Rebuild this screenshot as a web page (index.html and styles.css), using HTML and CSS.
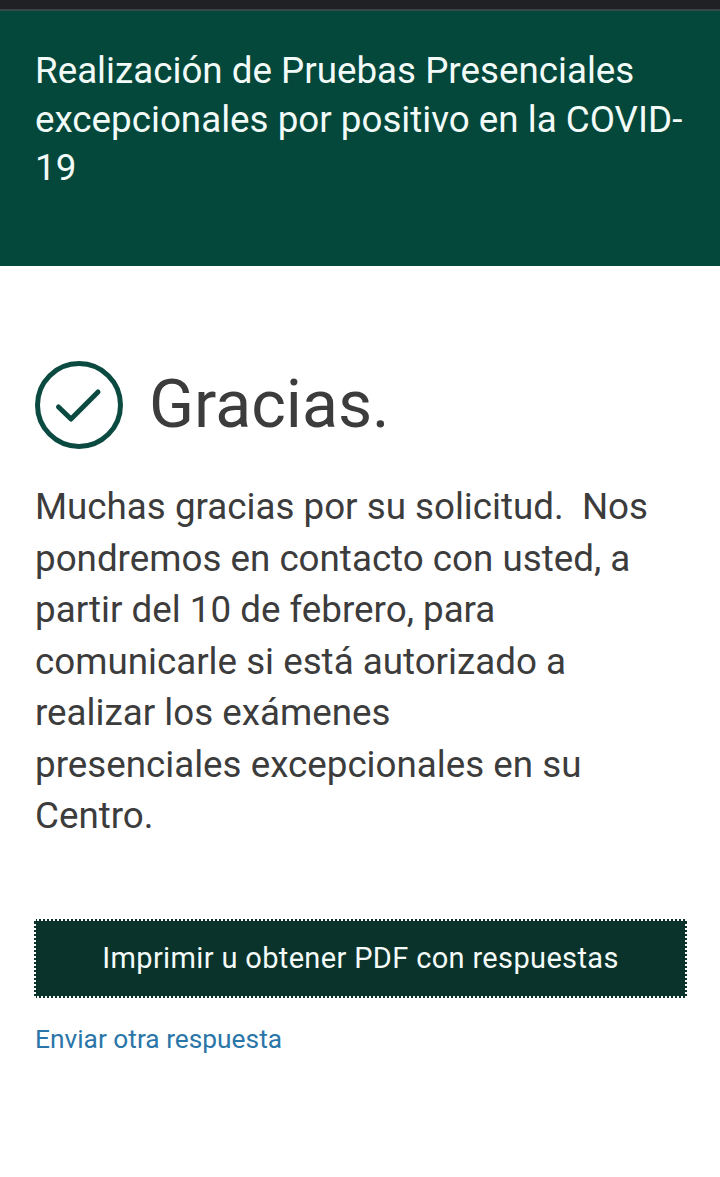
FILE: index.html
```html
<!DOCTYPE html>
<html lang="es">
<head>
  <meta charset="UTF-8">
  <title>Gracias</title>
  <link rel="stylesheet" href="styles.css">
</head>
<body>
  <div class="status-bar"></div>

  <!-- cabecera del formulario -->
  <header class="form-header">
    <h1>Realización de Pruebas Presenciales excepcionales por positivo en la COVID-19</h1>
  </header>

  <main class="content">
    <div class="thanks">
      <svg class="check-icon" viewBox="0 0 88 88" width="88" height="88" aria-hidden="true">
        <circle cx="44" cy="44" r="41.5" fill="none" stroke="#0b4a40" stroke-width="5"/>
        <path d="M23.5 46 L36 58 L63 31" fill="none" stroke="#0b4a40" stroke-width="5" stroke-linecap="round" stroke-linejoin="round"/>
      </svg>
      <h2>Gracias.</h2>
    </div>

    <p class="message">Muchas gracias por su solicitud.&nbsp; Nos pondremos en contacto con usted, a partir del 10 de febrero, para comunicarle si está autorizado a realizar los exámenes presenciales&nbsp;excepcionales en su Centro.</p>

    <button class="print-btn">Imprimir u obtener PDF con respuestas</button>
    <a class="again" href="#">Enviar otra respuesta</a>
  </main>
</body>
</html>
```

FILE: styles.css
```css
html, body {
  margin: 0;
  padding: 0;
  background: #fff;
}

body {
  font-family: Roboto, "Liberation Sans", sans-serif;
  color: #3c3c3c;
}

.status-bar {
  height: 9px;
  background-color: #202124;
  border-bottom: 2px solid #39474a;
}

.form-header {
  height: 255px;
  box-sizing: border-box;
  padding: 36px 30px 0 35px;
  background-color: #04473b;
}

.form-header h1 {
  margin: 0;
  font-size: 36.75px;
  font-weight: 400;
  line-height: 48.5px;
  color: #f2fbf8;
}

.content {
  padding: 95px 33px 0 35px;
}

.thanks {
  display: flex;
  align-items: center;
  gap: 26px;
}

.check-icon {
  flex: none;
}

.thanks h2 {
  margin: 0;
  font-size: 66.2px;
  font-weight: 400;
  line-height: 88px;
  color: #3c3c3c;
}

.message {
  margin: 32px 0 0;
  font-size: 36.75px;
  line-height: 51.5px;
  color: #3c3c3c;
}

.print-btn {
  display: block;
  width: 653px;
  height: 79px;
  margin: 77px 0 0 -1px;
  padding: 0;
  border: 2px dotted #fff;
  background-color: #0a332b;
  font-family: inherit;
  font-size: 29px;
  color: #f4fbf9;
  letter-spacing: 0.35px;
}

.again {
  display: inline-block;
  margin-top: 24px;
  font-size: 26.3px;
  line-height: 34px;
  color: #2a76a8;
  text-decoration: none;
}
```
